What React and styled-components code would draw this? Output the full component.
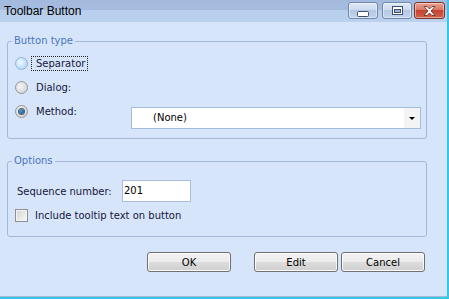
import React from "react";
import styled, { createGlobalStyle } from "styled-components";

const GlobalStyle = createGlobalStyle`
  html, body {
    margin: 0;
    padding: 0;
    background: #d7e5fa;
  }
`;

const Window = styled.div`
  width: 449px;
  height: 299px;
  box-sizing: border-box;
  display: flex;
  flex-direction: column;
  background: #d7e5fa;
  border-right: 2px solid #36c6e8;
  border-bottom: 2px solid #36c6e8;
  box-shadow: inset 0 -1px 0 #a9b9d2;
  font-family: "DejaVu Sans", sans-serif;
  font-size: 10px;
  color: #16163a;
  overflow: hidden;
`;

const TitleBar = styled.div`
  height: 22px;
  flex-shrink: 0;
  display: flex;
  align-items: flex-start;
  padding-left: 4px;
  background: linear-gradient(#a3b9dd 0, #a6bcdf 10px, #b7ceec 10px, #bbd1ee 22px);
`;

const Title = styled.div`
  font-family: "Liberation Sans", Arial, sans-serif;
  font-size: 12px;
  line-height: 22px;
  color: #000;
`;

const TitleButtons = styled.div`
  margin-left: auto;
  margin-top: 2px;
  margin-right: 2px;
  display: flex;
  gap: 4px;
`;

const TitleButton = styled.div`
  height: 17px;
  box-sizing: border-box;
  display: flex;
  align-items: center;
  justify-content: center;
  border-radius: 3px;
  border: 1px solid ${(p) => (p.$close ? "#7a3427" : "#7188b0")};
  background: ${(p) =>
    p.$close
      ? "linear-gradient(#eba193, #da735f 50%, #c3452f 50%, #d2604a)"
      : "linear-gradient(#dfe9f6, #cbd9ee 50%, #b5c8e3 50%, #c3d4ec)"};
  box-shadow: inset 0 0 0 1px rgba(255, 255, 255, 0.45);
  margin-left: ${(p) => (p.$close ? "-2px" : "0")};
  width: ${(p) => (p.$close ? "31px" : "30px")};
`;

const Body = styled.div`
  display: flex;
  flex-direction: column;
  padding: 12px 20px 0 7px;
`;

const Group = styled.fieldset`
  margin: 0;
  min-width: 0;
  border: 1px solid #a4b8da;
  border-radius: 3px;
  display: flex;
  flex-direction: column;
  gap: ${(p) => p.$gap}px;
  padding: ${(p) => p.$pad};
  margin-top: ${(p) => p.$top || 0}px;
`;

const Legend = styled.legend`
  padding: 0 2px;
  margin-left: -3px;
  line-height: 14px;
  color: #4a76c0;
`;

const Option = styled.div`
  display: flex;
  align-items: center;
  height: 15px;
  width: ${(p) => (p.$width ? `${p.$width}px` : "auto")};
  flex-shrink: 0;
`;

const Radio = styled.span`
  width: 13px;
  height: 13px;
  box-sizing: border-box;
  border-radius: 50%;
  display: flex;
  align-items: center;
  justify-content: center;
  border: 1px solid ${(p) => (p.$hot ? "#8fb4d8" : "#949698")};
  background: ${(p) =>
    p.$hot
      ? "radial-gradient(circle at 40% 40%, #eef8ff, #b9dcf3 70%, #a9cfea)"
      : "radial-gradient(circle at 40% 40%, #f6f6f6, #d6d6d6 70%, #c8c8c8)"};
`;

const Dot = styled.span`
  width: 5px;
  height: 5px;
  border-radius: 50%;
  background: radial-gradient(circle at 40% 40%, #4aa8e6, #145f9e 65%, #0b3f6e);
  box-shadow: 0 0 0 1px #5c6066;
`;

const OptionLabel = styled.span`
  margin-left: 4px;
  padding: 0 2px 0 4px;
  line-height: 13px;
  outline: ${(p) => (p.$focused ? "1px dotted #222" : "none")};
`;

const MethodRow = styled.div`
  display: flex;
  align-items: flex-start;
`;

const Select = styled.div`
  flex: 1;
  margin-top: 3px;
  height: 22px;
  box-sizing: border-box;
  display: flex;
  border: 1px solid #a6bcde;
  background: #fff;
`;

const SelectValue = styled.div`
  flex: 1;
  padding-left: 21px;
  line-height: 20px;
  color: #000;
`;

const SelectArrow = styled.div`
  width: 16px;
  display: flex;
  align-items: center;
  justify-content: center;
  background: #f4f4f4;

  &::after {
    content: "";
    border-left: 3px solid transparent;
    border-right: 3px solid transparent;
    border-top: 3px solid #000;
    margin-top: 1px;
  }
`;

const FieldRow = styled.div`
  display: flex;
  align-items: center;
  height: 22px;
`;

const FieldLabel = styled.span`
  width: 105px;
  margin-left: 2px;
`;

const TextInput = styled.div`
  width: 69px;
  height: 22px;
  box-sizing: border-box;
  border: 1px solid #a8bddf;
  background: #fff;
  padding-left: 1px;
  line-height: 20px;
  color: #000;
`;

const Checkbox = styled.span`
  width: 13px;
  height: 13px;
  box-sizing: border-box;
  border: 1px solid #8e9092;
  background: linear-gradient(135deg, #d2d2d2, #eeeeee 70%, #f8f8f8);
  box-shadow: inset 0 0 0 1px #f4f4f4;
`;

const CheckLabel = styled.span`
  margin-left: 7px;
`;

const ButtonRow = styled.div`
  display: flex;
  justify-content: flex-end;
  margin-top: 15px;
  padding-right: 2px;
`;

const Button = styled.div`
  width: 84px;
  height: 20px;
  box-sizing: border-box;
  border: 1px solid #707070;
  border-radius: 3px;
  background: linear-gradient(#f3f3f3, #ebebeb 50%, #dddddd 50%, #cfcfcf);
  box-shadow: inset 0 0 0 1px #fbfbfb;
  display: flex;
  align-items: center;
  justify-content: center;
  color: #000;
  margin-left: ${(p) => p.$gap}px;
`;

const MinGlyph = () => (
  <svg width="12" height="6" viewBox="0 0 12 6" style={{ marginTop: 7 }}>
    <rect x="0.5" y="0.5" width="11" height="5" rx="1" fill="#fff" stroke="#3e4f6e" />
  </svg>
);

const MaxGlyph = () => (
  <svg width="11" height="9" viewBox="0 0 11 9">
    <rect x="0.5" y="0.5" width="10" height="8" fill="#fff" stroke="#3e4f6e" />
    <rect x="2.5" y="3.5" width="6" height="3" fill="#9fb3d3" stroke="#3e4f6e" />
  </svg>
);

const CloseGlyph = () => (
  <svg width="13" height="10" viewBox="0 0 13 10">
    <path
      d="M1 0.5 H4 L6.5 3 L9 0.5 H12 L8 5 L12 9.5 H9 L6.5 7 L4 9.5 H1 L5 5 Z"
      fill="#fff"
      stroke="#5a2a22"
      strokeWidth="0.8"
      strokeLinejoin="round"
    />
  </svg>
);

export default function App() {
  return (
    <>
      <GlobalStyle />
      <Window>
        <TitleBar>
          <Title>Toolbar Button</Title>
          <TitleButtons>
            <TitleButton>
              <MinGlyph />
            </TitleButton>
            <TitleButton>
              <MaxGlyph />
            </TitleButton>
            <TitleButton $close>
              <CloseGlyph />
            </TitleButton>
          </TitleButtons>
        </TitleBar>

        <Body>
          <Group $gap={9} $pad="8px 5px 9px 7px">
            <Legend>Button type</Legend>
            <Option>
              <Radio $hot />
              <OptionLabel $focused>Separator</OptionLabel>
            </Option>
            <Option>
              <Radio />
              <OptionLabel>Dialog:</OptionLabel>
            </Option>
            <MethodRow>
              <Option $width={116}>
                <Radio>
                  <Dot />
                </Radio>
                <OptionLabel>Method:</OptionLabel>
              </Option>
              <Select>
                <SelectValue>(None)</SelectValue>
                <SelectArrow />
              </Select>
            </MethodRow>
          </Group>

          <Group $gap={6} $pad="12px 5px 13px 7px" $top={15}>
            <Legend>Options</Legend>
            <FieldRow>
              <FieldLabel>Sequence number:</FieldLabel>
              <TextInput>201</TextInput>
            </FieldRow>
            <Option>
              <Checkbox />
              <CheckLabel>Include tooltip text on button</CheckLabel>
            </Option>
          </Group>

          <ButtonRow>
            <Button $gap={0}>OK</Button>
            <Button $gap={23}>Edit</Button>
            <Button $gap={3}>Cancel</Button>
          </ButtonRow>
        </Body>
      </Window>
    </>
  );
}
